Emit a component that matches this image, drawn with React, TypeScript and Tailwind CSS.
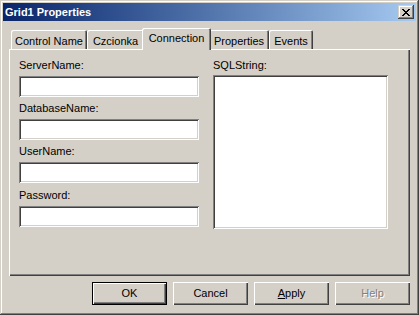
import React from "react";

const font = { fontFamily: '"Liberation Sans", Arial, sans-serif' };

const tabs = [
  { label: "Control Name", w: "w-[76px]" },
  { label: "Czcionka", w: "w-[57px]" },
  { label: "Connection", w: "w-[69px]", active: true },
  { label: "Properties", w: "w-[60px]" },
  { label: "Events", w: "w-[44px]" },
];

function CloseGlyph() {
  // 8x7 classic caption X
  const rows = [
    "XX....XX",
    ".XX..XX.",
    "..XXXX..",
    "...XX...",
    "..XXXX..",
    ".XX..XX.",
    "XX....XX",
  ];
  return (
    <svg width="8" height="7" viewBox="0 0 8 7" shapeRendering="crispEdges">
      {rows.map((r, y) =>
        r.split("").map((c, x) =>
          c === "X" ? <rect key={`${x}-${y}`} x={x} y={y} width="1" height="1" fill="#000" /> : null
        )
      )}
    </svg>
  );
}

function Field({ label, className = "" }: { label: string; className?: string }) {
  return (
    <div className={className}>
      <div className="h-[13px] leading-[13px]">{label}</div>
      <div className="mt-[4px] h-[21px] w-[180px] bg-white shadow-[inset_1px_1px_0_#808080,inset_-1px_-1px_0_#fff,inset_2px_2px_0_#404040,inset_-2px_-2px_0_#d4d0c8]" />
    </div>
  );
}

function Button({ children, primary, disabled }: { children: React.ReactNode; primary?: boolean; disabled?: boolean }) {
  return (
    <div
      className={
        "flex h-[23px] w-[75px] items-center justify-center bg-[#d4d0c8] leading-[13px] " +
        (primary
          ? "border border-black shadow-[inset_1px_1px_0_#fff,inset_-1px_-1px_0_#404040,inset_-2px_-2px_0_#808080]"
          : "shadow-[inset_1px_1px_0_#fff,inset_-1px_-1px_0_#404040,inset_-2px_-2px_0_#808080]") +
        (disabled ? " text-[#808080] [text-shadow:1px_1px_0_#fff]" : " text-black")
      }
    >
      {children}
    </div>
  );
}

export default function App() {
  return (
    <div
      style={font}
      className="flex h-[315px] w-[419px] flex-col bg-[#d4d0c8] p-[3px] text-[11px] text-black shadow-[inset_-1px_-1px_0_#404040,inset_1px_1px_0_#d4d0c8,inset_-2px_-2px_0_#808080,inset_2px_2px_0_#fff]"
    >
      {/* Title bar */}
      <div className="flex h-[18px] items-center justify-between bg-gradient-to-r from-[#0a246a] to-[#a6caf0] pl-[2px] pr-[2px]">
        <span className="text-[11px] font-bold leading-[13px] text-white">Grid1 Properties</span>
        <div className="flex h-[14px] w-[16px] items-center justify-center bg-[#d4d0c8] shadow-[inset_-1px_-1px_0_#404040,inset_1px_1px_0_#d4d0c8,inset_-2px_-2px_0_#808080,inset_2px_2px_0_#fff]">
          <CloseGlyph />
        </div>
      </div>

      <div className="flex flex-1 flex-col px-[6px]">
        {/* Tabs */}
        <div className="mt-[7px] flex h-[21px] items-end pl-[2px]">
          {tabs.map((t) =>
            t.active ? (
              <div
                key={t.label}
                className={`${t.w} relative z-10 -mx-[2px] -mb-[1px] flex h-[22px] items-start justify-center rounded-t-[2px] bg-[#d4d0c8] pt-[4px] leading-[13px] shadow-[inset_1px_1px_0_#fff,inset_-1px_0_0_#404040,inset_-2px_0_0_#808080]`}
              >
                {t.label}
              </div>
            ) : (
              <div
                key={t.label}
                className={`${t.w} flex h-[19px] items-start justify-center rounded-t-[2px] bg-[#d4d0c8] pt-[5px] leading-[13px] shadow-[inset_1px_1px_0_#fff,inset_-1px_0_0_#404040,inset_-2px_0_0_#808080]`}
              >
                {t.label}
              </div>
            )
          )}
        </div>

        {/* Panel */}
        <div className="flex h-[227px] gap-[14px] pl-[10px] pt-[10px] shadow-[inset_1px_1px_0_#fff,inset_-1px_-1px_0_#404040,inset_-2px_-2px_0_#808080]">
          <div className="flex flex-col">
            <Field label="ServerName:" />
            <Field label="DatabaseName:" className="mt-[5px]" />
            <Field label="UserName:" className="mt-[5px]" />
            <Field label="Password:" className="mt-[6px]" />
          </div>
          <div className="flex flex-col">
            <div className="h-[13px] leading-[13px]">SQLString:</div>
            <div className="mt-[3px] h-[154px] w-[175px] bg-white shadow-[inset_1px_1px_0_#808080,inset_-1px_-1px_0_#fff,inset_2px_2px_0_#404040,inset_-2px_-2px_0_#d4d0c8]" />
          </div>
        </div>

        {/* Buttons */}
        <div className="mt-[6px] flex justify-end gap-[6px]">
          <Button primary>OK</Button>
          <Button>Cancel</Button>
          <Button>
            <span>
              <span className="underline underline-offset-[1px]">A</span>pply
            </span>
          </Button>
          <Button disabled>Help</Button>
        </div>
      </div>
    </div>
  );
}
